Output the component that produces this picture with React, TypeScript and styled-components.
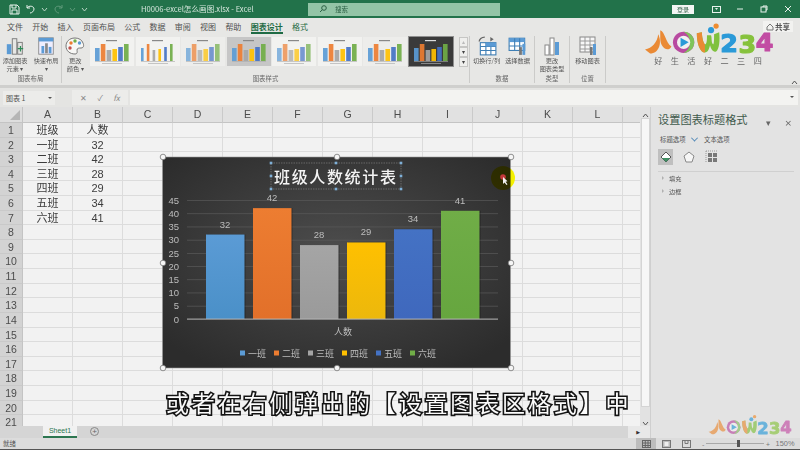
import React from "react";
import styled, { createGlobalStyle } from "styled-components";

const Global = createGlobalStyle`
  html, body { margin: 0; padding: 0; width: 800px; height: 450px; overflow: hidden; background: #e6e6e6; }
  * { box-sizing: border-box; }
  body { font-family: "Noto Sans CJK SC", "Liberation Sans", sans-serif; }
`;

const Page = styled.div`
  position: relative; width: 800px; height: 450px; overflow: hidden;
  display: flex; flex-direction: column; background: #e6e6e6; color: #444;
`;
const Soft = styled.div`
  display: flex; flex-direction: column; width: 800px; height: 450px; filter: blur(0.45px);
`;

/* title bar */
const TitleBar = styled.div`
  height: 18px; flex: none; background: #22724a; color: #e8f2ec; display: flex; align-items: center; position: relative;
`;
const Qat = styled.div`display: flex; align-items: center; gap: 5px; width: 141px; padding-left: 9px;`;
const DocName = styled.div`width: 167px; font-size: 7.6px; color: #d5e6dc; white-space: nowrap; line-height: 18px;`;
const SearchBox = styled.div`
  width: 192px; height: 13px; background: #93c4a6; display: flex; align-items: center; gap: 8px; padding-left: 11px;
  font-size: 6.5px; color: #2c5f44;
`;
const TitleRight = styled.div`margin-left: auto; display: flex; align-items: center; height: 18px;`;
const Login = styled.div`
  width: 22px; height: 9px; background: #f3f6f4; color: #36644c; font-size: 6px; line-height: 9px; text-align: center; margin-right: 10px;
`;
const WinBtn = styled.div`width: 24px; display: flex; justify-content: center; align-items: center;`;

/* tabs */
const TabRow = styled.div`
  height: 17px; flex: none; display: flex; align-items: center; padding-left: 7px; gap: 9.3px; background: #e7e7e5; position: relative;
`;
const Tab = styled.div<{ $on?: boolean; $green?: boolean }>`
  font-size: 8px; line-height: 13px; height: 14px; white-space: nowrap;
  color: ${p => (p.$on || p.$green ? "#1f6b44" : "#505050")};
  font-weight: ${p => (p.$on ? 700 : 400)};
  border-bottom: ${p => (p.$on ? "2px solid #1f6b44" : "2px solid transparent")};
`;
const Share = styled.div`
  position: absolute; right: 7px; top: 3px; width: 30px; height: 11px; background: #f2f2f0; font-size: 7.5px; font-weight: 700;
  color: #555; display: flex; align-items: center; justify-content: center; gap: 1px;
`;

/* ribbon */
const Ribbon = styled.div`
  height: 50px; flex: none; display: flex; background: #e7e7e5; position: relative;
`;
const Group = styled.div<{ $w: number }>`
  width: ${p => p.$w}px; flex: none; display: flex; flex-direction: column; border-right: 1px solid #cbcbc9; margin: 1px 0 2px;
`;
const GroupBody = styled.div`flex: 1; display: flex; justify-content: center; gap: 3px; min-height: 0;`;
const GroupLabel = styled.div`font-size: 6.4px; line-height: 9px; text-align: center; color: #666;`;
const RibbonBtn = styled.div<{ $w?: number }>`
  width: ${p => p.$w ?? 28}px; display: flex; flex-direction: column; align-items: center; font-size: 6.2px; line-height: 8px; color: #555; text-align: center; white-space: nowrap;
  svg { margin-bottom: 1px; flex: none; }
`;
const Gallery = styled.div`display: flex; gap: 1.5px; align-items: flex-start; padding-top: 1px;`;
const Thumb = styled.div<{ $on?: boolean }>`
  width: 44px; height: 29px; line-height: 0; flex: none; background: #f0f0ee;
  outline: ${p => (p.$on ? "1.5px solid #8f8f8f" : "none")};
`;
const GalleryArrows = styled.div`display: flex; flex-direction: column; width: 9px; margin-left: 3px; margin-top: 1px;`;
const GArrow = styled.div<{ $dim?: boolean }>`
  height: 10px; border: 1px solid #c6c6c4; background: #efefed; font-size: 6px; line-height: 8px; text-align: center; color: ${p => (p.$dim ? "#bbb" : "#444")};
`;
const Collapse = styled.div`position: absolute; right: 2px; bottom: 0; line-height: 0;`;

/* formula */
const FormulaBar = styled.div`
  height: 22px; flex: none; display: flex; align-items: center; gap: 2px; padding: 0 2px 0 3px;
  border-top: 3px solid #cfcfcd; background: #e4e4e2;
`;
const NameBox = styled.div`
  width: 52px; height: 14px; background: #ececea; font-size: 7px; line-height: 14px; padding-left: 3px; color: #555; position: relative;
  &::after { content: ""; position: absolute; right: 3px; top: 6px; border: 2px solid transparent; border-top-color: #555; }
`;
const FxArea = styled.div`
  width: 56px; height: 15px; margin-left: 15px; background: #ececea; display: flex; align-items: center; justify-content: space-around; padding: 0 3px; font-size: 8px; color: #888;
`;
const FormulaInput = styled.div`flex: 1; height: 15px; background: #f3f3f1; position: relative;
  &::after { content: ""; position: absolute; right: 4px; top: 6px; border: 2.5px solid transparent; border-top-color: #555; }
`;

/* main */
const Main = styled.div`height: 331px; flex: none; display: flex;`;
const SheetCol = styled.div`width: 651px; flex: none; display: flex; flex-direction: column; border-right: 1px solid #cfcfcf;`;
const SheetBody = styled.div`height: 319px; flex: none; display: flex;`;
const Cells = styled.div`
  width: 640px; flex: none; overflow: hidden; display: grid; align-content: start;
  grid-template-columns: 23px repeat(13, 50px); grid-template-rows: 16px repeat(21, 14.62px);
`;
const Corner = styled.div`background: #dedede; border-right: 1px solid #c4c4c4; border-bottom: 1px solid #c4c4c4; position: relative;
  &::after { content: ""; position: absolute; right: 2px; bottom: 2px; border: 5px solid transparent; border-right-color: #b5b5b5; border-bottom-color: #b5b5b5; }
`;
const ColHead = styled.div`
  background: #e1e1e1; border-right: 1px solid #cacaca; border-bottom: 1px solid #c4c4c4; font-size: 10.5px; line-height: 15px; text-align: center; color: #4c4c4c; font-family: "Liberation Sans", sans-serif;
`;
const RowHead = styled.div`
  background: #d3d3d3; border-right: 1px solid #c4c4c4; border-bottom: 1px solid #c9c9c9; font-size: 10.5px; line-height: 14px; text-align: center; color: #4c4c4c; font-family: "Liberation Sans", sans-serif;
`;
const Cell = styled.div`
  background: #f2f2f2; border-right: 1px solid #dcdcdc; border-bottom: 1px solid #dcdcdc; font-size: 11px; line-height: 14px; text-align: center; color: #3c3c3c; white-space: nowrap;
  font-family: "Liberation Sans", "Noto Sans CJK SC", sans-serif;
`;
const VScroll = styled.div`width: 10px; flex: none; background: #e2e2e2; display: flex; flex-direction: column; align-items: center;`;
const VArrow = styled.div`height: 11px; flex: none; line-height: 0; padding-top: 4px;`;
const VThumb = styled.div`width: 9px; flex: 1; background: #f6f6f6; margin-bottom: 8px; border: 1px solid #d4d4d4;`;
const TabStrip = styled.div`height: 12px; flex: none; display: flex; align-items: stretch; background: #d5d5d5; position: relative; padding-left: 43px;`;
const SheetTab = styled.div`
  width: 34px; background: #f1f1f1; color: #2c7650; font-size: 7px; line-height: 10px; text-align: center; border-bottom: 2px solid #2c7650; font-family: "Liberation Sans", sans-serif;
`;
const AddSheet = styled.div`
  width: 9px; height: 9px; margin: 1px 0 0 13px; border: 1px solid #888; border-radius: 50%; font-size: 8px; line-height: 7px; text-align: center; color: #666; font-family: "Liberation Sans", sans-serif;
`;
const HScroll = styled.div`
  margin-left: auto; width: 22px; background: #e8e8e8; font-size: 5px; line-height: 12px; text-align: right; padding-right: 10px; color: #333; font-family: "DejaVu Sans", sans-serif;
`;

/* panel */
const Panel = styled.div`flex: 1; background: #e3e3e3; padding: 4px 0 0 7px; position: relative; display: flex; flex-direction: column;`;
const PanelTitleRow = styled.div`display: flex; align-items: center; height: 17px;`;
const PanelTitle = styled.div`font-size: 11.2px; line-height: 17px; color: #3f5a4c; white-space: nowrap;`;
const PanelCtl = styled.div`position: absolute; right: 8px; top: 11px; font-size: 9px; line-height: 10px; color: #666; display: flex; gap: 14px; font-family: "DejaVu Sans", sans-serif;`;
const PanelTabs = styled.div`display: flex; align-items: center; height: 12px; margin-top: 5px; padding-left: 2px; font-size: 6.4px; color: #555;`;
const PanelTabOn = styled.div`width: 44px; display: flex; gap: 3px; align-items: center;`;
const Chevron = styled.span`width: 5px; height: 5px; border-right: 1px solid #4f87b8; border-bottom: 1px solid #4f87b8; transform: rotate(45deg) translate(-1px,-1px); display: inline-block; margin-left: 3px;`;
const PanelIcons = styled.div`display: flex; align-items: center; gap: 8px; margin-top: 3px; height: 17px;`;
const PanelIcon = styled.div<{ $on?: boolean }>`
  width: 15px; height: 16px; display: flex; align-items: center; justify-content: center; background: ${p => (p.$on ? "#bfbfbf" : "transparent")};
`;
const PanelSep = styled.div`height: 1px; background: #d0d0d0; margin: 6px 6px 0 0;`;
const PanelItem = styled.div`font-size: 6.2px; line-height: 13px; padding-left: 11px; color: #555; position: relative;
  &::before { content: ""; position: absolute; left: 4px; top: 4px; border: 2.5px solid transparent; border-left-color: #b0b0b0; }
`;
const PanelItems = styled.div``;

/* status */
const StatusBar = styled.div`
  height: 12px; flex: none; display: flex; align-items: center; background: #dcdcdc; border-bottom: 1px solid #555; font-size: 6.4px; color: #555; padding-left: 3px; position: relative;
`;
const StatusRight = styled.div`margin-left: auto; display: flex; align-items: center; height: 11px;`;
const ViewBtn = styled.div<{ $on?: boolean }>`
  width: 20px; height: 11px; display: flex; align-items: center; justify-content: center; background: ${p => (p.$on ? "#bdbdbd" : "transparent")};
`;
const Zoomer = styled.div`
  width: 68px; margin-left: 6px; display: flex; align-items: center; gap: 2px; color: #777; font-size: 7px;
`;
const ZoomTrack = styled.div`flex: 1; height: 1px; background: #a8a8a8; position: relative;
  &::after { content: ""; position: absolute; left: 31px; top: -3px; width: 3px; height: 7px; background: #555; }
`;
const ZoomPct = styled.div`width: 30px; text-align: center; font-size: 7.4px; color: #777; font-family: "Liberation Sans", sans-serif;`;

/* overlays */
const ChartLayer = styled.svg`position: absolute; left: 150px; top: 145px; width: 380px; height: 240px; overflow: visible; filter: blur(0.35px);`;
const Spot = styled.circle`mix-blend-mode: multiply;`;
const ChartText = styled.text`font-family: "Liberation Sans", "Noto Sans CJK SC", sans-serif; fill: #bdbdbd;`;
const ChartTitle = styled.text`font-family: "Noto Sans CJK SC", sans-serif; font-size: 16px; letter-spacing: 1.65px; fill: #f4f4f4; font-weight: 500;`;
const Subtitle = styled.div`
  position: absolute; left: 166px; top: 386px; font-size: 23px; line-height: 32px; letter-spacing: 2.85px; white-space: nowrap; color: #fbfbfb; font-weight: 400;
  -webkit-text-stroke: 3.2px #141414; paint-order: stroke fill; font-family: "Noto Sans CJK SC", sans-serif;
`;
const LogoWrap = styled.div<{ $l: number; $t: number; $w: number; $o?: number }>`
  position: absolute; left: ${p => p.$l}px; top: ${p => p.$t}px; width: ${p => p.$w}px; opacity: ${p => p.$o ?? 1}; line-height: 0;
`;
const LogoDigits = styled.text`font-family: "DejaVu Sans", sans-serif; font-weight: 700; font-size: 25px; stroke-width: 1.2px; stroke-linejoin: round;`;
const LogoTag = styled.text`font-family: "Noto Sans CJK SC", sans-serif; font-size: 8px; fill: #666;`;

const BARS = ["#5b9bd5", "#ed7d31", "#a5a5a5", "#ffc000", "#4472c4", "#70ad47"];
const SHADES = ["#4a90c8", "#e2702a", "#9a9a9a", "#ecb80c", "#3f68bd", "#66a63f"];

function Logo({ tag }: { tag?: boolean }) {
  return (
    <svg viewBox="0 0 128 42" width="100%">
      <path d="M1 27 C8 26 13 20 14 12 C18 20 15 31 6 31 Z" fill="#ea8a35" />
      <path d="M16 8 C21 10 21 20 27 24 C24 30 16 26 16 16 Z" fill="#ea8a35" />
      <circle cx="39" cy="20" r="10.5" fill="#b84aa0" />
      <path d="M39 9.500 A10.500 10.500 0 0 1 39 30.500 A12 12 0 0 0 39 9.500 Z" fill="#7fc45a" />
      <circle cx="39" cy="20" r="6.500" fill="#f1f1ef" />
      <path d="M36 15.500 L44 20 L36 24.500 Z" fill="#2b9ad8" />
      <path d="M52 11 C52 21 55 30 60 30 C63 30 64 27 65 23 C66 27 68 30 71 29 C74 27 75 18 74 10 L69 12 C69 17 69 22 68 22 C66 20 67 15 66 13 L62 13 C62 17 62 22 60 22 C58 20 57 14 57 10 Z" fill="#7fc13d" />
      <path d="M52 11 C52 21 55 30 60 30 L60 22 C58 20 57 14 57 10 Z" fill="#ea8a35" />
      <circle cx="71" cy="4" r="2.600" fill="#ef8c2f" />
      <circle cx="66" cy="8" r="3" fill="#2b9ad8" />
      <LogoDigits x="75" y="30" fill="#2b9ad8" stroke="#2b9ad8">2</LogoDigits>
      <LogoDigits x="93" y="31" fill="#86c23c" stroke="#86c23c">3</LogoDigits>
      <LogoDigits x="110" y="29" fill="#c24da3" stroke="#c24da3">4</LogoDigits>
      {tag && <LogoTag x="10" y="41" textLength="106">好 生 活 好 二 三 四</LogoTag>}
    </svg>
  );
}

function MiniChart({ v }: { v: number }) {
  const dark = v === 7;
  const bg = dark ? "#3a3a3a" : v === 3 ? "#c6c6c6" : v === 2 || v === 6 ? "#ededeb" : "#f2f2f0";
  const hs = [13, 17, 11, 12, 14, 17];
  const w = v === 1 ? 2.6 : 4.6;
  const step = 5.8;
  const pastel = v === 2 || v === 4;
  return (
    <svg width="44" height="29" viewBox="0 0 44 29">
      <rect width="44" height="29" fill={bg} />
      <rect x="16" y="3" width="11" height="1.200" fill={dark ? "#ddd" : "#888"} />
      {BARS.map((c, i) => (
        <rect key={c} x={5 + i * step} y={24 - hs[i]} width={w} height={hs[i]} fill={c} opacity={pastel ? 0.7 : 0.92} />
      ))}
      <rect x="5" y="24" width="34" height="0.600" fill="#aaa" />
      <rect x="12" y="26" width="20" height="1" fill={dark ? "#888" : "#c4c4c4"} />
    </svg>
  );
}

const IconBars = () => (
  <svg width="20" height="20" viewBox="0 0 22 22">
    <rect x="2" y="9" width="5" height="11" fill="#5b9bd5" /><rect x="8" y="3" width="5" height="17" fill="none" stroke="#777" />
    <rect x="14" y="7" width="5" height="13" fill="none" stroke="#777" /><path d="M14 14h6M17 11v6" stroke="#2e8b57" strokeWidth="1.400" />
  </svg>
);
const IconLayout = () => (
  <svg width="20" height="20" viewBox="0 0 22 22">
    <rect x="3" y="2" width="16" height="18" fill="#eef" stroke="#8a8a8a" /><rect x="3" y="2" width="16" height="4" fill="#5b9bd5" />
    <rect x="6" y="11" width="3" height="8" fill="#5b9bd5" /><rect x="10" y="8" width="3" height="11" fill="#8a8a8a" /><rect x="14" y="12" width="3" height="7" fill="#5b9bd5" />
  </svg>
);
const IconPalette = () => (
  <svg width="20" height="20" viewBox="0 0 20 20">
    <path d="M10 2 C4 2 1 6 1 10 C1 15 5 18 10 18 C13 18 12 15 12 14 C12 12 14 12 16 12 C19 12 19 9 18 7 C17 4 14 2 10 2 Z" fill="#f7f7f5" stroke="#777" />
    <circle cx="6" cy="7" r="1.700" fill="#ed7d31" /><circle cx="10" cy="5" r="1.700" fill="#70ad47" /><circle cx="14.500" cy="7" r="1.700" fill="#5b9bd5" /><circle cx="5" cy="12" r="1.700" fill="#c0504d" />
  </svg>
);
const IconSwitch = () => (
  <svg width="20" height="20" viewBox="0 0 18 18">
    <rect x="3" y="6" width="14" height="11" fill="#fff" stroke="#3f7fb5" /><path d="M3 9.500h14M3 13h14M8 6v11M12.500 6v11" stroke="#3f7fb5" /><rect x="8" y="6" width="9" height="3.500" fill="#5b9bd5" />
    <path d="M2 5 C2 3 4 1 7 1" fill="none" stroke="#666" strokeWidth="1.200" /><path d="M12 1l3 2-3 2z" fill="#666" />
  </svg>
);
const IconSelect = () => (
  <svg width="20" height="20" viewBox="0 0 18 18">
    <rect x="1" y="2" width="14" height="11" fill="#fff" stroke="#3f7fb5" /><rect x="1" y="2" width="14" height="3.500" fill="#5b9bd5" /><path d="M1 9h14M6 2v11M10.500 2v11" stroke="#3f7fb5" />
    <rect x="10" y="10" width="2.500" height="7" fill="#777" /><rect x="13" y="7" width="2.500" height="10" fill="#5b9bd5" />
  </svg>
);
const IconType = () => (
  <svg width="20" height="20" viewBox="0 0 20 20">
    <rect x="3" y="9" width="4" height="10" fill="#fff" stroke="#888" /><rect x="8" y="2" width="4" height="17" fill="#fff" stroke="#888" /><rect x="13" y="6" width="4" height="13" fill="#5b9bd5" />
  </svg>
);
const IconMove = () => (
  <svg width="20" height="20" viewBox="0 0 20 20">
    <rect x="2" y="1" width="15" height="15" fill="#f7f7f7" stroke="#888" /><path d="M2 5h15M2 9h15M2 13h15M7 1v15M12 1v15" stroke="#999" />
    <rect x="12" y="11" width="2.500" height="8" fill="#777" /><rect x="15" y="8" width="3" height="11" fill="#5b9bd5" />
  </svg>
);
const Caret = ({ up, c = "#555" }: { up?: boolean; c?: string }) => (
  <svg width="7" height="5" viewBox="0 0 7 5"><path d={up ? "M1 4l2.500-3 2.500 3" : "M1 1l2.500 3 2.500-3"} fill="none" stroke={c} /></svg>
);

const ROWS: [string, string][] = [["班级", "人数"], ["一班", "32"], ["二班", "42"], ["三班", "28"], ["四班", "29"], ["五班", "34"], ["六班", "41"]];
const COLS = ["A", "B", "C", "D", "E", "F", "G", "H", "I", "J", "K", "L", ""];
const VALUES = [32, 42, 28, 29, 34, 41];
const BARX = [206, 253, 300, 347, 394, 441];
const NAMES = ["一班", "二班", "三班", "四班", "五班", "六班"];
const BASE = 319;
const UNIT = 2.64;

function Chart() {
  const handles: [number, number][] = [[163, 157], [337, 157], [511, 157], [163, 263], [511, 263], [163, 368], [337, 368], [511, 368]];
  const blue: [number, number][] = [[271, 163], [401, 163], [271, 189], [401, 189], [336, 163], [336, 189], [271, 176], [401, 176]];
  return (
    <ChartLayer viewBox="150 145 380 240">
      <defs>
        <radialGradient id="cbg" cx="50%" cy="45%" r="65%">
          <stop offset="0" stopColor="#4d4d4d" /><stop offset="1" stopColor="#2c2c2c" />
        </radialGradient>
        {BARS.map((c, i) => (
          <linearGradient key={c} id={`b${i}`} x1="0" y1="0" x2="0" y2="1">
            <stop offset="0" stopColor={c} /><stop offset="1" stopColor={SHADES[i]} />
          </linearGradient>
        ))}
      </defs>
      <rect x="162.500" y="157" width="348" height="211" fill="url(#cbg)" stroke="#9a9a9a" strokeWidth="0.600" />
      {[5, 10, 15, 20, 25, 30, 35, 40, 45].map(t => (
        <rect key={t} x="187" y={BASE - t * UNIT} width="311" height="0.700" fill="#5a5a5a" />
      ))}
      {[0, 5, 10, 15, 20, 25, 30, 35, 40, 45].map(t => (
        <ChartText key={t} x="179" y={BASE - t * UNIT + 3.500} fontSize="9.500" textAnchor="end">{t}</ChartText>
      ))}
      {VALUES.map((v, i) => (
        <g key={i}>
          <rect x={BARX[i] + 1} y={BASE - v * UNIT} width="38.500" height={v * UNIT} fill="#000" opacity="0.3" />
          <rect x={BARX[i]} y={BASE - v * UNIT} width="38.500" height={v * UNIT} fill={`url(#b${i})`} />
          <ChartText x={BARX[i] + 19} y={BASE - v * UNIT - 7} fontSize="9.500" textAnchor="middle">{v}</ChartText>
        </g>
      ))}
      <rect x="187" y="318.600" width="311" height="1" fill="#b8b8b8" />
      <ChartText x="343" y="335" fontSize="9" textAnchor="middle">人数</ChartText>
      {NAMES.map((n, i) => (
        <g key={n}>
          <rect x={240 + i * 34} y="350.500" width="5" height="5" fill={BARS[i]} />
          <ChartText x={248 + i * 34} y="356.500" fontSize="9">{n}</ChartText>
        </g>
      ))}
      <rect x="271" y="163" width="130" height="26" fill="none" stroke="#8a8a8a" strokeWidth="0.600" strokeDasharray="1.500 1" />
      <ChartTitle x="274" y="183">班级人数统计表</ChartTitle>
      {blue.map(([x, y]) => <rect key={`${x}-${y}`} x={x - 1.300} y={y - 1.300} width="2.600" height="2.600" fill="#7fb0d8" />)}
      {handles.map(([x, y]) => <circle key={`${x}-${y}`} cx={x} cy={y} r="2.800" fill="#f5f5f5" stroke="#666" strokeWidth="0.700" />)}
      <Spot cx="503" cy="178" r="12" fill="#f4f000" />
      <circle cx="503" cy="177" r="2.800" fill="#c4383a" />
      <path d="M503 177 l0 7 l1.500 -1.500 l2 2.500 l1 -.8 l-2 -2.500 l2 -.5 z" fill="#f4f4f4" />
    </ChartLayer>
  );
}

export default function App() {
  return (
    <Page>
      <Global />
      <Soft>
        <TitleBar>
          <Qat>
            <svg width="11" height="11" viewBox="0 0 11 11"><path d="M1 1h7l2 2v7H1z M3 1v3h4V1 M3 10V6h5v4" fill="none" stroke="#e8f2ec" /></svg>
            <svg width="11" height="10" viewBox="0 0 11 10"><path d="M2 1v3h3 M2 4 C4 1 9 2 9 5 C9 7 7 9 5 9" fill="none" stroke="#e8f2ec" /></svg>
            <Caret c="#b8d4c4" />
            <svg width="11" height="10" viewBox="0 0 11 10"><path d="M9 1v3H6 M9 4 C7 1 2 2 2 5 C2 7 4 9 6 9" fill="none" stroke="#5f9a7a" /></svg>
            <Caret c="#5f9a7a" />
            <Caret c="#b8d4c4" />
          </Qat>
          <DocName>H0006-excel怎么画图.xlsx  -  Excel</DocName>
          <SearchBox>
            <svg width="8" height="8" viewBox="0 0 8 8"><circle cx="5" cy="3" r="2.300" fill="none" stroke="#2c5f44" /><path d="M3.300 4.800L1 7" stroke="#2c5f44" /></svg>
            搜索
          </SearchBox>
          <TitleRight>
            <Login>登录</Login>
            <WinBtn><svg width="9" height="7" viewBox="0 0 9 7"><rect x=".5" y=".5" width="8" height="6" fill="none" stroke="#e8f2ec" /><path d="M3 2l1.500 2 1.500-2z" fill="#e8f2ec" /></svg></WinBtn>
            <WinBtn><svg width="8" height="2" viewBox="0 0 8 2"><path d="M1 1h6" stroke="#e8f2ec" /></svg></WinBtn>
            <WinBtn><svg width="8" height="8" viewBox="0 0 8 8"><rect x="1" y="2" width="5" height="5" fill="none" stroke="#e8f2ec" /><path d="M3 2V1h4v4H6" fill="none" stroke="#e8f2ec" /></svg></WinBtn>
            <WinBtn><svg width="8" height="8" viewBox="0 0 8 8"><path d="M1 1l6 6M7 1L1 7" stroke="#e8f2ec" /></svg></WinBtn>
          </TitleRight>
        </TitleBar>
        <TabRow>
          <Tab>文件</Tab><Tab>开始</Tab><Tab>插入</Tab><Tab>页面布局</Tab><Tab>公式</Tab><Tab>数据</Tab><Tab>审阅</Tab><Tab>视图</Tab><Tab>帮助</Tab>
          <Tab $on>图表设计</Tab><Tab $green>格式</Tab>
          <Share>
            <svg width="8" height="8" viewBox="0 0 8 8"><path d="M1 7V4l3-3 3 3v3z" fill="none" stroke="#777" /></svg>共享
          </Share>
        </TabRow>
        <Ribbon>
          <Group $w={62}>
            <GroupBody>
              <RibbonBtn><IconBars />添加图表<br />元素 ▾</RibbonBtn>
              <RibbonBtn><IconLayout />快速布局<br />▾</RibbonBtn>
            </GroupBody>
            <GroupLabel>图表布局</GroupLabel>
          </Group>
          <Group $w={408}>
            <GroupBody>
              <RibbonBtn $w={24}><IconPalette />更改<br />颜色 ▾</RibbonBtn>
              <Gallery>
                {[0, 1, 2, 3, 4, 5, 6, 7].map(v => <Thumb key={v} $on={v === 7}><MiniChart v={v} /></Thumb>)}
              </Gallery>
              <GalleryArrows><GArrow $dim>▴</GArrow><GArrow>▾</GArrow><GArrow>▾</GArrow></GalleryArrows>
            </GroupBody>
            <GroupLabel>图表样式</GroupLabel>
          </Group>
          <Group $w={65}>
            <GroupBody>
              <RibbonBtn><IconSwitch />切换行/列</RibbonBtn>
              <RibbonBtn><IconSelect />选择数据</RibbonBtn>
            </GroupBody>
            <GroupLabel>数据</GroupLabel>
          </Group>
          <Group $w={35}>
            <GroupBody><RibbonBtn><IconType />更改<br />图表类型</RibbonBtn></GroupBody>
            <GroupLabel>类型</GroupLabel>
          </Group>
          <Group $w={36}>
            <GroupBody><RibbonBtn><IconMove />移动图表</RibbonBtn></GroupBody>
            <GroupLabel>位置</GroupLabel>
          </Group>
          <Collapse><Caret up /></Collapse>
        </Ribbon>
        <FormulaBar>
          <NameBox>图表 1</NameBox>
          <FxArea><span>✕</span><span>✓</span><i>fx</i></FxArea>
          <FormulaInput />
        </FormulaBar>
        <Main>
          <SheetCol>
            <SheetBody>
              <Cells>
                <Corner />
                {COLS.map((c, i) => <ColHead key={i}>{c}</ColHead>)}
                {Array.from({ length: 21 }, (_, r) => (
                  <React.Fragment key={r}>
                    <RowHead>{r + 1}</RowHead>
                    {COLS.map((c, ci) => <Cell key={ci}>{ci < 2 && ROWS[r] ? ROWS[r][ci] : ""}</Cell>)}
                  </React.Fragment>
                ))}
              </Cells>
              <VScroll>
                <VArrow><Caret up /></VArrow>
                <VThumb />
                <VArrow><Caret /></VArrow>
              </VScroll>
            </SheetBody>
            <TabStrip>
              <SheetTab>Sheet1</SheetTab>
              <AddSheet>+</AddSheet>
              <HScroll>▶</HScroll>
            </TabStrip>
          </SheetCol>
          <Panel>
            <PanelTitleRow><PanelTitle>设置图表标题格式</PanelTitle></PanelTitleRow>
            <PanelCtl><span>▾</span><span>×</span></PanelCtl>
            <PanelTabs><PanelTabOn>标题选项<Chevron /></PanelTabOn><span>文本选项</span></PanelTabs>
            <PanelIcons>
              <PanelIcon $on><svg width="12" height="12" viewBox="0 0 12 12"><path d="M6 1l5 5-5 5-5-5z" fill="#fff" stroke="#555" /><path d="M2 7h8l-4 4z" fill="#3f8f63" /></svg></PanelIcon>
              <PanelIcon><svg width="12" height="12" viewBox="0 0 12 12"><path d="M6 1l5 4-2 6H3L1 5z" fill="#f6f6f6" stroke="#888" /></svg></PanelIcon>
              <PanelIcon><svg width="13" height="13" viewBox="0 0 13 13"><path d="M1 1h11M1 1v11" stroke="#999" strokeDasharray="1 1" /><rect x="3" y="3" width="9" height="9" fill="#777" /><path d="M7.500 3v9M3 7.500h9" stroke="#e3e3e3" /></svg></PanelIcon>
            </PanelIcons>
            <PanelSep />
            <PanelItems>
              <PanelItem>填充</PanelItem>
              <PanelItem>边框</PanelItem>
            </PanelItems>
          </Panel>
        </Main>
        <StatusBar>
          就绪
          <StatusRight>
            <ViewBtn $on><svg width="9" height="8" viewBox="0 0 9 8"><rect x=".5" y=".5" width="8" height="7" fill="none" stroke="#666" /><path d="M.5 3h8M.5 5.500h8M3.300 .5v7M6 .5v7" stroke="#666" /></svg></ViewBtn>
            <ViewBtn><svg width="9" height="8" viewBox="0 0 9 8"><rect x=".5" y=".5" width="8" height="7" fill="#bbb" stroke="#777" /><rect x="2.500" y="2" width="4" height="4" fill="#eee" /></svg></ViewBtn>
            <ViewBtn><svg width="9" height="8" viewBox="0 0 9 8"><rect x=".5" y=".5" width="8" height="7" fill="none" stroke="#777" /><path d="M3 .5v3h3v-3" fill="none" stroke="#777" /></svg></ViewBtn>
            <Zoomer>-<ZoomTrack />+</Zoomer>
            <ZoomPct>150%</ZoomPct>
          </StatusRight>
        </StatusBar>
      </Soft>
      <Chart />
      <LogoWrap $l={644} $t={22} $w={130}><Logo tag /></LogoWrap>
      <LogoWrap $l={708} $t={414} $w={84} $o={0.65}><Logo /></LogoWrap>
      <Subtitle>或者在右侧弹出的【设置图表区格式】中</Subtitle>
    </Page>
  );
}
